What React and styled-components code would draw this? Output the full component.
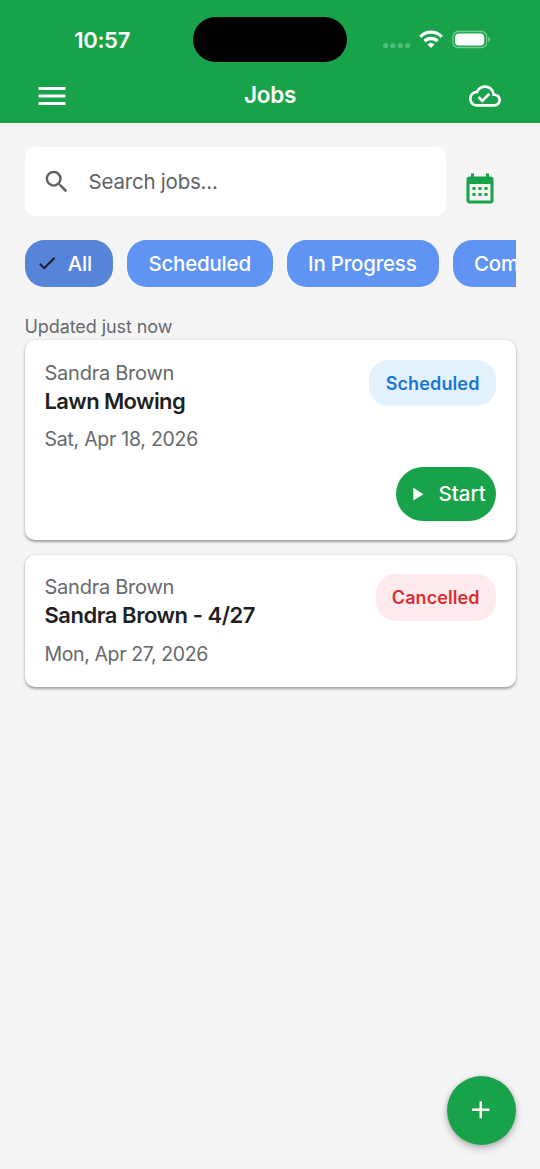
import styled, { createGlobalStyle } from "styled-components"

const GlobalStyle=createGlobalStyle`
    * {
        box-sizing: border-box;
    }
    body {
        margin: 0;
        background-color: #f5f5f5;
        font-family: Inter, "Liberation Sans", sans-serif;
        overflow: hidden;
    }
    button {
        font-family: inherit;
        border: none;
        padding: 0;
        background: none;
    }
`

const Container=styled.div`
    position: relative;
    width: 540px;
    height: 1169px;
    overflow: hidden;
`

const Header=styled.header`
    height: 122.7px;
    background-color: #18a34a;
    color: white;
`

const StatusBar=styled.div`
    display: grid;
    grid-template-columns: 193px 154px 1fr;
    padding-top: 16.8px;
    height: 69px;
`

const Time=styled.div`
    padding-left: 74.2px;
    font-size: 22px;
    font-weight: 600;
    line-height: 47px;
    letter-spacing: -0.3px;
`

const Island=styled.div`
    height: 45px;
    border-radius: 22.5px;
    background-color: black;
`

const StatusIcons=styled.div`
    display: flex;
    height: 45px;
    padding-left: 36px;
`

const NavBar=styled.div`
    display: grid;
    grid-template-columns: 1fr auto 1fr;
    align-items: center;
    height: 54px;
    padding: 0 39px 0 34px;
`

const NavTitle=styled.h1`
    margin: 0;
    padding: 0 0 2px 5px;
    font-size: 22.5px;
    font-weight: 600;
    line-height: 52px;
    letter-spacing: -0.3px;
`

const IconButton=styled.button`
    display: flex;
    color: ${props=>props.$color || 'white'};
    justify-self: ${props=>props.$end ? 'end' : 'start'};
`

const Svg=styled.svg`
    display: block;
    flex: none;
    fill: currentColor;
`

const Content=styled.main`
    padding: 24.5px 24.5px 0;
`

const SearchRow=styled.div`
    display: flex;
    align-items: flex-start;
`

const SearchBox=styled.div`
    display: flex;
    align-items: center;
    width: 421px;
    height: 68.4px;
    padding-left: 17.3px;
    border-radius: 10px;
    background-color: white;
    color: #5f6368;
`

const Placeholder=styled.span`
    margin-left: 17.3px;
    padding-top: 1px;
    font-size: 20.5px;
    letter-spacing: -0.22px;
`

const CalendarButton=styled(IconButton)`
    margin: 25px 0 0 16.8px;
`

const Chips=styled.div`
    display: flex;
    gap: 14.4px;
    margin-top: 24.5px;
    overflow: hidden;
`

const Chip=styled.button`
    display: flex;
    align-items: center;
    flex: none;
    width: ${props=>props.$width}px;
    height: 46.6px;
    padding-left: ${props=>props.$selected ? '11.3px' : '21px'};
    border-radius: 19.6px;
    background-color: ${props=>props.$selected ? '#5684d9' : '#5f93f4'};
    color: white;
    font-size: 20.5px;
    font-weight: 500;
    white-space: nowrap;
    letter-spacing: -0.22px;
`

const CheckMark=styled.span`
    margin-right: 10px;
    color: #1c1b1f;
`

const Updated=styled.p`
    margin: 26.4px 0 0;
    font-size: 18px;
    line-height: 27px;
    color: #66696e;
    letter-spacing: -0.08px;
`

const Card=styled.article`
    margin-bottom: 14.5px;
    padding: 19.6px 19.8px 19.6px 20px;
    border-radius: 10px;
    background-color: white;
    box-shadow: 0 1.2px 2.4px rgba(0, 0, 0, 0.28), 0 1px 4px rgba(0, 0, 0, 0.12);
`

const CardTop=styled.div`
    display: flex;
    justify-content: space-between;
    align-items: flex-start;
`

const Customer=styled.div`
    padding-top: 1px;
    font-size: 20px;
    line-height: 25px;
    color: #66696e;
    letter-spacing: -0.25px;
`

const JobTitle=styled.h2`
    margin: 0;
    font-size: 22px;
    font-weight: 600;
    line-height: 30px;
    color: #1f1f1f;
    letter-spacing: ${props=>props.$spacing}px;
`

const JobDate=styled.div`
    margin-top: 11.6px;
    font-size: 19.5px;
    line-height: 25px;
    color: #66696e;
    letter-spacing: ${props=>props.$spacing}px;
`

const Badge=styled.span`
    height: 46.6px;
    padding: 0 16.2px;
    border-radius: 19.6px;
    background-color: ${props=>props.$cancelled ? '#ffebee' : '#e3f1fd'};
    color: ${props=>props.$cancelled ? '#d63031' : '#1976d2'};
    font-size: 18px;
    font-weight: 600;
    line-height: 47.6px;
    letter-spacing: ${props=>props.$cancelled ? 0.07 : 0.13}px;
`

const CardActions=styled.div`
    display: flex;
    justify-content: flex-end;
    margin-top: 14.4px;
`

const StartButton=styled.button`
    display: flex;
    align-items: center;
    width: 99.6px;
    height: 54px;
    padding-left: 10px;
    border-radius: 27px;
    background-color: #18a34a;
    color: white;
    font-size: 20.5px;
    font-weight: 500;
`

const StartLabel=styled.span`
    margin-left: 10.4px;
`

const Fab=styled.button`
    position: absolute;
    right: 24.5px;
    bottom: 24.5px;
    display: flex;
    align-items: center;
    justify-content: center;
    width: 69px;
    height: 69px;
    border-radius: 50%;
    background-color: #18a34a;
    color: white;
    box-shadow: 0 4px 9px rgba(0, 0, 0, 0.2), 0 1px 5px rgba(0, 0, 0, 0.18);
`

const icons={
    menu:'M3,6H21V8H3V6M3,11H21V13H3V11M3,16H21V18H3V16Z',
    cloud:'M19.35 10.04C18.67 6.59 15.64 4 12 4 9.11 4 6.61 5.64 5.36 8.04 2.35 8.36 0 10.9 0 14c0 3.31 2.69 6 6 6h13c2.76 0 5-2.24 5-5 0-2.64-2.05-4.78-4.65-4.96zM19 18H6c-2.21 0-4-1.79-4-4s1.79-4 4-4h.71C7.37 7.69 9.48 6 12 6c3.04 0 5.5 2.46 5.5 5.5v.5H19c1.66 0 3 1.34 3 3s-1.34 3-3 3zM10 14.18L7.91 12.09 6.5 13.5 10 17 16.01 10.99 14.6 9.58z',
    magnify:'M9.5,3A6.5,6.5 0 0,1 16,9.5C16,11.11 15.41,12.59 14.44,13.73L14.71,14H15.5L20.5,19L19,20.5L14,15.5V14.71L13.73,14.44C12.59,15.41 11.11,16 9.5,16A6.5,6.5 0 0,1 3,9.5A6.5,6.5 0 0,1 9.5,3M9.5,5C7,5 5,7 5,9.5C5,12 7,14 9.5,14C12,14 14,12 14,9.5C14,7 12,5 9.5,5Z',
    calendar:'M9,10V12H7V10H9M13,10V12H11V10H13M17,10V12H15V10H17M19,3A2,2 0 0,1 21,5V19A2,2 0 0,1 19,21H5C3.89,21 3,20.1 3,19V5A2,2 0 0,1 5,3H6V1H8V3H16V1H18V3H19M19,19V8H5V19H19M9,14V16H7V14H9M13,14V16H11V14H13M17,14V16H15V14H17Z',
    check:'M21,7L9,19L3.5,13.5L4.91,12.09L9,16.17L19.59,5.59L21,7Z',
    play:'M8,5.14V19.14L19,12.14L8,5.14Z',
    plus:'M19,13H13V19H11V13H5V11H11V5H13V11H19V13Z'
}

const Icon = ({name,size}) => (
    <Svg width={size} height={size} viewBox='0 0 24 24'>
        <path d={icons[name]}/>
    </Svg>
)

const StatusGlyphs = () => (
    <Svg width='110' height='45' viewBox='0 0 110 45'>
        <g opacity='0.25'>
            <circle cx='2.6' cy='28.5' r='2.6'/>
            <circle cx='9.9' cy='28.5' r='2.6'/>
            <circle cx='17.3' cy='28.5' r='2.6'/>
            <circle cx='24.7' cy='28.5' r='2.6'/>
        </g>
        <g fill='none' stroke='white' strokeWidth='3.3'>
            <path d='M37.3 19.8A14.6 14.6 0 0 1 58.7 19.8'/>
            <path d='M41.5 24.2A9.2 9.2 0 0 1 54.5 24.2'/>
        </g>
        <path d='M44.5 27.4A5.2 5.2 0 0 1 51.5 27.4L48 31Z'/>
        <rect x='70' y='14.5' width='33.6' height='16' rx='5' fill='none' stroke='white' strokeOpacity='0.42' strokeWidth='1.3'/>
        <rect x='72' y='16.4' width='29.2' height='12.2' rx='3.8'/>
        <path d='M105.3 20V25.2C106.5 24.7 107.1 23.8 107.1 22.6S106.5 20.5 105.3 20Z' opacity='0.5'/>
    </Svg>
)

const filters=[
    {label:'All',width:88.6,selected:true},
    {label:'Scheduled',width:145.2},
    {label:'In Progress',width:151.6},
    {label:'Completed',width:148}
]

const jobs=[
    {id:1,customer:'Sandra Brown',title:'Lawn Mowing',date:'Sat, Apr 18, 2026',status:'Scheduled',titleSpacing:-0.62,dateSpacing:-0.26},
    {id:2,customer:'Sandra Brown',title:'Sandra Brown - 4/27',date:'Mon, Apr 27, 2026',status:'Cancelled',titleSpacing:-0.46,dateSpacing:-0.38}
]

const Job = ({job}) => (
    <Card>
        <CardTop>
            <div>
                <Customer>{job.customer}</Customer>
                <JobTitle $spacing={job.titleSpacing}>{job.title}</JobTitle>
                <JobDate $spacing={job.dateSpacing}>{job.date}</JobDate>
            </div>
            <Badge $cancelled={job.status==='Cancelled'}>{job.status}</Badge>
        </CardTop>
        {job.status==='Scheduled' && (
            <CardActions>
                <StartButton>
                    <Icon name='play' size={22}/>
                    <StartLabel>Start</StartLabel>
                </StartButton>
            </CardActions>
        )}
    </Card>
)

const App = () => {
  return (
    <Container>
        <GlobalStyle/>
        <Header>
            <StatusBar>
                <Time>10:57</Time>
                <Island/>
                <StatusIcons>
                    <StatusGlyphs/>
                </StatusIcons>
            </StatusBar>
            <NavBar>
                <IconButton><Icon name='menu' size={36}/></IconButton>
                <NavTitle>Jobs</NavTitle>
                <IconButton $end><Icon name='cloud' size={32}/></IconButton>
            </NavBar>
        </Header>
        <Content>
            <SearchRow>
                <SearchBox>
                    <Icon name='magnify' size={29.5}/>
                    <Placeholder>Search jobs...</Placeholder>
                </SearchBox>
                <CalendarButton $color='#18a34a'><Icon name='calendar' size={36}/></CalendarButton>
            </SearchRow>
            <Chips>
                {filters.map(item=>(
                    <Chip key={item.label} $width={item.width} $selected={item.selected}>
                        {item.selected && <CheckMark><Icon name='check' size={22}/></CheckMark>}
                        {item.label}
                    </Chip>
                ))}
            </Chips>
            <Updated>Updated just now</Updated>
            {jobs.map(job=><Job key={job.id} job={job}/>)}
        </Content>
        <Fab><Icon name='plus' size={29.5}/></Fab>
    </Container>
  )
}

export default App
